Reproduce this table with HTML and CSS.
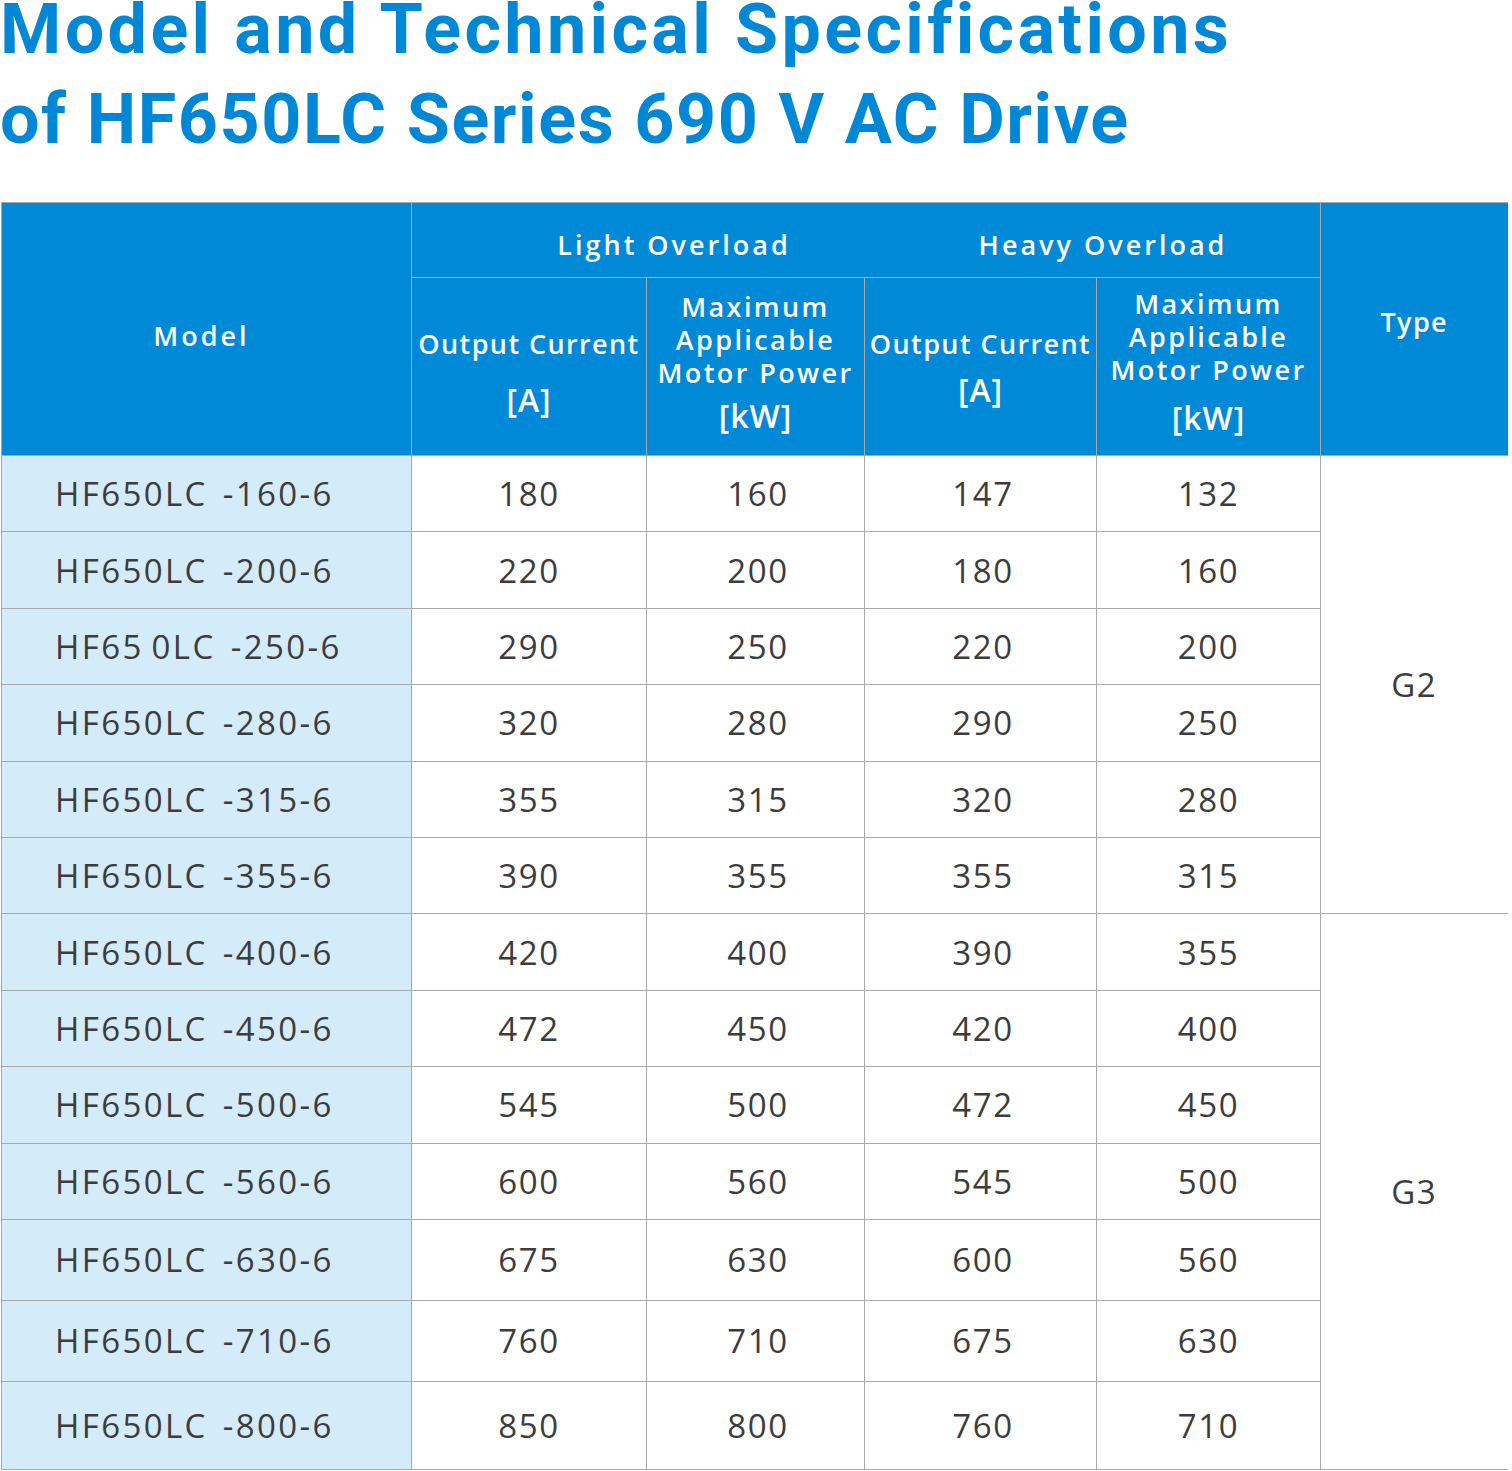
FILE: index.html
```html
<!DOCTYPE html>
<html lang="en">
<head>
<meta charset="utf-8">
<title>Model and Technical Specifications of HF650LC Series 690 V AC Drive</title>
<link rel="stylesheet" href="styles.css">
</head>
<body>
<h1 class="title"><span class="title-line line-1">Model and Technical Specifications</span><span class="title-line line-2">of HF650LC Series 690 V AC Drive</span></h1>
<table class="spec">
  <colgroup>
    <col class="c-model"><col class="c-lo-a"><col class="c-lo-kw"><col class="c-ho-a"><col class="c-ho-kw"><col class="c-type">
  </colgroup>
  <thead>
    <tr class="h1">
      <th rowspan="2" class="th-model">Model</th>
      <th colspan="4" class="th-group">
        <div class="groups"><span class="g-light">Light Overload</span><span class="g-heavy">Heavy Overload</span></div>
      </th>
      <th rowspan="2" class="th-type last"><span class="type-label">Type</span></th>
    </tr>
    <tr class="h2">
      <th><div class="stack stack-a1"><span class="lbl">Output Current</span><span class="unit unit-a1">[A]</span></div></th>
      <th><div class="stack stack-kw1"><span class="lbl">Maximum<br>Applicable<br>Motor Power</span><span class="unit unit-kw">[kW]</span></div></th>
      <th><div class="stack stack-a2"><span class="lbl">Output Current</span><span class="unit unit-a2">[A]</span></div></th>
      <th><div class="stack stack-kw2"><span class="lbl">Maximum<br>Applicable<br>Motor Power</span><span class="unit unit-kw">[kW]</span></div></th>
    </tr>
  </thead>
  <tbody>
    <tr><td class="model">HF650LC -160-6</td><td>180</td><td class="num-r">160</td><td class="num-r">147</td><td>132</td><td rowspan="6" class="type last">G2</td></tr>
    <tr><td class="model">HF650LC -200-6</td><td>220</td><td class="num-r">200</td><td class="num-r">180</td><td>160</td></tr>
    <tr><td class="model">HF65&#8201;0LC -250-6</td><td>290</td><td class="num-r">250</td><td class="num-r">220</td><td>200</td></tr>
    <tr><td class="model">HF650LC -280-6</td><td>320</td><td class="num-r">280</td><td class="num-r">290</td><td>250</td></tr>
    <tr><td class="model">HF650LC -315-6</td><td>355</td><td class="num-r">315</td><td class="num-r">320</td><td>280</td></tr>
    <tr><td class="model">HF650LC -355-6</td><td>390</td><td class="num-r">355</td><td class="num-r">355</td><td>315</td></tr>
    <tr><td class="model">HF650LC -400-6</td><td>420</td><td class="num-r">400</td><td class="num-r">390</td><td>355</td><td rowspan="7" class="type last">G3</td></tr>
    <tr><td class="model">HF650LC -450-6</td><td>472</td><td class="num-r">450</td><td class="num-r">420</td><td>400</td></tr>
    <tr><td class="model">HF650LC -500-6</td><td>545</td><td class="num-r">500</td><td class="num-r">472</td><td>450</td></tr>
    <tr><td class="model">HF650LC -560-6</td><td>600</td><td class="num-r">560</td><td class="num-r">545</td><td>500</td></tr>
    <tr class="tall"><td class="model">HF650LC -630-6</td><td>675</td><td class="num-r">630</td><td class="num-r">600</td><td>560</td></tr>
    <tr class="tall"><td class="model">HF650LC -710-6</td><td>760</td><td class="num-r">710</td><td class="num-r">675</td><td>630</td></tr>
    <tr class="final"><td class="model">HF650LC -800-6</td><td>850</td><td class="num-r">800</td><td class="num-r">760</td><td>710</td></tr>
  </tbody>
</table>
</body>
</html>
```
FILE: styles.css
```css
html, body {
  margin: 0;
  padding: 0;
  background: #ffffff;
}

body {
  width: 1512px;
  font-family: "Open Sans", "Noto Sans", sans-serif;
}

.title {
  margin: -16px 0 38px 0;
  font-family: Roboto, "Noto Sans", sans-serif;
  font-weight: 700;
  font-size: 70px;
  line-height: 90px;
  color: #0088d6;
  white-space: nowrap;
}

.title-line {
  display: block;
}

.line-1 {
  letter-spacing: 3.4px;
}

.line-2 {
  letter-spacing: 1.6px;
}

.spec {
  margin-left: 1px;
  width: 1506px;
  table-layout: fixed;
  border-collapse: collapse;
  border-spacing: 0;
}

.c-model { width: 410px; }
.c-lo-a { width: 235px; }
.c-lo-kw { width: 218px; }
.c-ho-a { width: 232px; }
.c-ho-kw { width: 224px; }
.c-type { width: 187px; }

.spec th,
.spec td {
  border: 1px solid #a9a9a9;
  padding: 0;
  text-align: center;
  vertical-align: middle;
}

.spec th {
  background: #0089d6;
  color: #ffffff;
  font-weight: 600;
  font-size: 27px;
  letter-spacing: 1.4px;
}

.spec .last {
  border-right: none;
}

.h1 th { height: 74px; }
.h2 th { height: 177px; }

.spec .th-model {
  padding-top: 12px;
  padding-right: 10px;
  letter-spacing: 3px;
}

.groups {
  display: grid;
  grid-template-columns: 524px 334px;
  padding-top: 10px;
  letter-spacing: 3px;
}

.g-light, .g-heavy {
  text-align: center;
  line-height: 30px;
}

.type-label {
  display: block;
  padding-bottom: 16px;
}

.stack {
  display: flex;
  flex-direction: column;
  align-items: center;
}

.stack-a1 { padding-top: 12px; }
.stack-a2 { padding-top: 2px; }
.stack-kw1 { padding-bottom: 10px; }
.stack-kw2 { padding-bottom: 14px; }

.lbl {
  line-height: 33px;
}

.stack-kw1 .lbl,
.stack-kw2 .lbl {
  letter-spacing: 2.4px;
}

.unit {
  font-weight: 600;
  font-size: 32px;
  line-height: 36px;
  letter-spacing: 1px;
}

.unit-a1 { margin-top: 22px; }
.unit-a2 { margin-top: 12px; }
.unit-kw { margin-top: 9px; }
.stack-kw2 .unit-kw { margin-top: 14px; margin-bottom: -4px; }

.spec td {
  height: 75.4px;
  color: #3c3c3c;
  font-size: 33px;
  letter-spacing: 1.6px;
  background: #ffffff;
  white-space: nowrap;
}

.spec td.num-r {
  padding-left: 5px;
}

.spec tr.tall td { height: 80px; }
.spec tr.final td { height: 87px; }

.spec td.model {
  background: #d4ebf9;
  text-align: left;
  padding-left: 53px;
  letter-spacing: 2.4px;
  word-spacing: 4px;
}

.spec td.type {
  background: #ffffff;
  padding-left: 0;
}
```
